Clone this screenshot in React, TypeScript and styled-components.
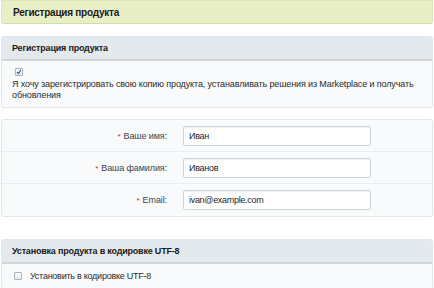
import React from "react";
import styled, { createGlobalStyle } from "styled-components";

const GlobalStyle = createGlobalStyle`
  html, body {
    margin: 0;
    padding: 0;
    background: #ffffff;
  }
  body {
    font-family: "Liberation Sans", Arial, sans-serif;
    font-size: 9px;
    letter-spacing: -0.25px;
    color: #2a2a2a;
  }
`;

const Page = styled.div`
  width: 434px;
  padding: 0 1px;
  box-sizing: border-box;
  display: flex;
  flex-direction: column;
`;

const TitleBar = styled.div`
  height: 24px;
  box-sizing: border-box;
  display: flex;
  align-items: center;
  padding-left: 11px;
  background: #e8efc6;
  border: 1px solid #dde5b8;
  border-bottom-color: #d3dca4;
  border-radius: 0 0 3px 3px;
  font-size: 10px;
  font-weight: bold;
  color: #1a1a1a;
`;

const Panel = styled.section<{ $top: number }>`
  margin-top: ${(p) => p.$top}px;
  background: #f8fafb;
  border: 1px solid #e1e6e9;
  border-radius: 3px;
  overflow: hidden;
`;

const PanelHeader = styled.div`
  height: 24px;
  box-sizing: border-box;
  display: flex;
  align-items: center;
  padding-left: 10px;
  background: #e3e9ec;
  border-bottom: 2px solid #cfd6da;
  font-weight: bold;
  letter-spacing: -0.2px;
  color: #1a1a1a;
`;

const ConsentBody = styled.div`
  padding: 6px 10px 6px 10px;
  line-height: 11px;
  white-space: nowrap;
  letter-spacing: -0.12px;
  color: #2a2a2a;
`;

const Check = styled.span`
  display: inline-block;
  width: 8px;
  height: 8px;
  box-sizing: border-box;
  border: 1px solid #a9b3bd;
  background: linear-gradient(#ffffff, #e3e8ec);
  border-radius: 1px;
  position: relative;
  flex-shrink: 0;
`;

const CheckLine = styled.div`
  height: 10px;
  display: flex;
  align-items: center;
  padding-left: 3px;
  margin-bottom: 2px;
`;

const FormRow = styled.div<{ $last?: boolean }>`
  height: 32px;
  box-sizing: border-box;
  display: grid;
  grid-template-columns: 165px 188px;
  column-gap: 16px;
  align-items: center;
  border-bottom: ${(p) => (p.$last ? "none" : "1px solid #e9edef")};
`;

const Label = styled.label`
  text-align: right;
  color: #444444;
  letter-spacing: -0.1px;
`;

const Star = styled.span`
  color: #d42a2a;
  margin-right: 3px;
  font-size: 8px;
`;

const Input = styled.div`
  height: 20px;
  box-sizing: border-box;
  display: flex;
  align-items: center;
  padding-left: 5px;
  background: #ffffff;
  border: 1px solid #cfd4d8;
  border-radius: 2px;
  box-shadow: inset 0 1px 1px rgba(0, 0, 0, 0.06);
  letter-spacing: -0.3px;
  color: #1f1f1f;
`;

const OptionRow = styled.div`
  height: 24px;
  display: flex;
  align-items: center;
  padding-left: 12px;
  gap: 8px;
  color: #2a2a2a;
`;

const CheckMark = () => (
  <svg
    width="8"
    height="8"
    viewBox="0 0 8 8"
    style={{ position: "absolute", left: -1, top: -1 }}
  >
    <path d="M2 4.2 L3.3 5.6 L6 1.8" fill="none" stroke="#2b4f9e" strokeWidth="1.1" />
  </svg>
);

const fields = [
  { label: "Ваше имя:", value: "Иван" },
  { label: "Ваша фамилия:", value: "Иванов" },
  { label: "Email:", value: "ivan@example.com" },
];

export default function App() {
  return (
    <>
      <GlobalStyle />
      <Page>
        <TitleBar>Регистрация продукта</TitleBar>

        <Panel $top={12}>
          <PanelHeader>Регистрация продукта</PanelHeader>
          <ConsentBody>
            <CheckLine>
              <Check>
                <CheckMark />
              </Check>
            </CheckLine>
            Я хочу зарегистрировать свою копию продукта, устанавливать решения из Marketplace и получать
            <br />
            обновления
          </ConsentBody>
        </Panel>

        <Panel $top={11}>
          {fields.map((f, i) => (
            <FormRow key={f.label} $last={i === fields.length - 1}>
              <Label>
                <Star>*</Star>
                {f.label}
              </Label>
              <Input>{f.value}</Input>
            </FormRow>
          ))}
        </Panel>

        <Panel $top={22}>
          <PanelHeader>Установка продукта в кодировке UTF-8</PanelHeader>
          <OptionRow>
            <Check />
            Установить в кодировке UTF-8
          </OptionRow>
        </Panel>
      </Page>
    </>
  );
}
